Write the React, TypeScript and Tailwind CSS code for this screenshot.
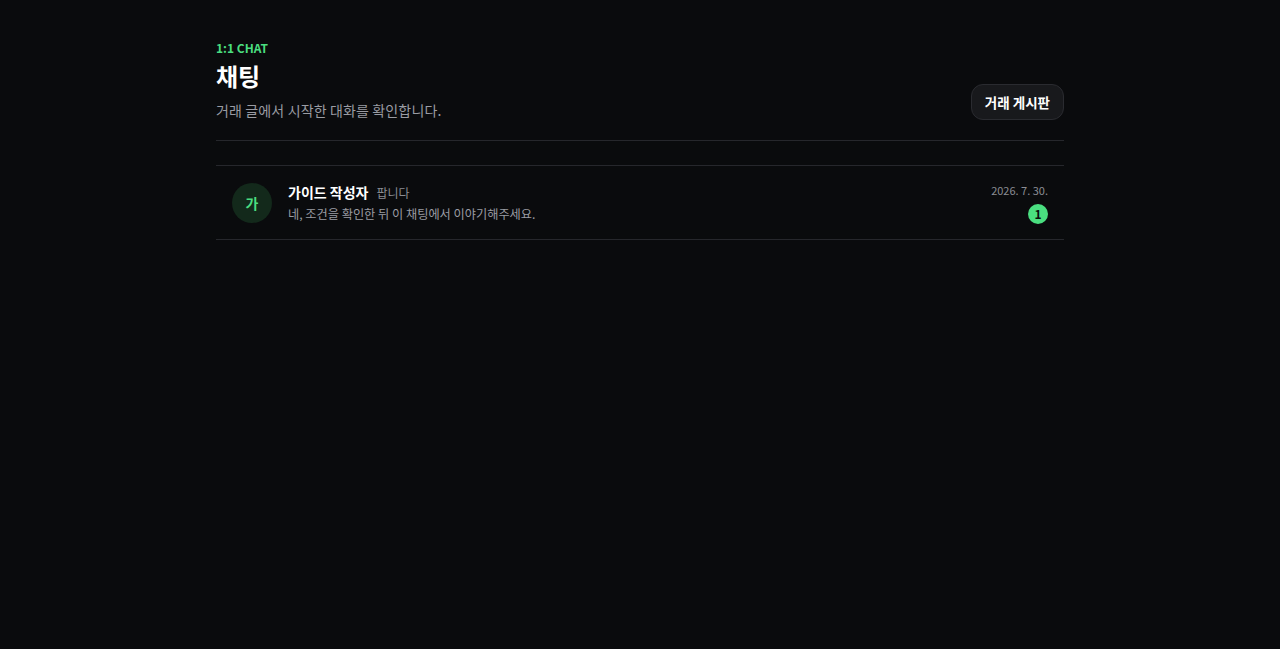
import React from "react";

type ChatRoom = {
  id: number;
  initial: string;
  name: string;
  postTitle: string;
  lastMessage: string;
  date: string;
  unread: number;
};

const rooms: ChatRoom[] = [
  {
    id: 1,
    initial: "가",
    name: "가이드 작성자",
    postTitle: "팝니다",
    lastMessage: "네, 조건을 확인한 뒤 이 채팅에서 이야기해주세요.",
    date: "2026. 7. 30.",
    unread: 1,
  },
];

const App: React.FC = () => {
  return (
    <div
      className="min-h-screen bg-[#0a0b0d] text-white"
      style={{ fontFamily: '"Noto Sans CJK KR", "Noto Sans", sans-serif' }}
    >
      <div className="mx-auto w-[848px] pt-10">
        {/* Header */}
        <div className="flex items-end justify-between border-b border-[#26272c] pb-5">
          <div>
            <p className="text-xs font-bold leading-4 text-[#4ade80]">1:1 CHAT</p>
            <h1 className="mt-1 text-2xl font-bold leading-8">채팅</h1>
            <p className="mt-2 text-sm leading-5 tracking-[0.01em] text-[#9a9ca3]">
              거래 글에서 시작한 대화를 확인합니다.
            </p>
          </div>
          <button className="h-9 rounded-xl border border-[#2a2b30] bg-[#18191c] px-[13px] text-[13.5px] font-bold text-white">
            거래 게시판
          </button>
        </div>

        {/* Room list */}
        <ul className="mt-6 border-t border-[#26272c]">
          {rooms.map((room) => (
            <li
              key={room.id}
              className="flex h-[74px] items-center gap-4 border-b border-[#26272c] px-4"
            >
              <div className="flex h-10 w-10 shrink-0 items-center justify-center rounded-full bg-[#13291b] text-sm font-bold text-[#4ade80]">
                {room.initial}
              </div>
              <div className="min-w-0 flex-1">
                <div className="flex items-baseline gap-2 leading-5">
                  <span className="text-sm font-bold">{room.name}</span>
                  <span className="text-xs text-[#8b8d94]">{room.postTitle}</span>
                </div>
                <p className="mt-[3px] truncate text-[12.2px] leading-[18px] text-[#9a9ca3]">
                  {room.lastMessage}
                </p>
              </div>
              <div className="flex flex-col items-end gap-1.5">
                <span className="text-[11px] leading-4 text-[#8b8d94]">{room.date}</span>
                {room.unread > 0 && (
                  <span className="flex h-5 min-w-5 items-center justify-center rounded-full bg-[#4ade80] px-1 text-xs font-bold text-[#0a0b0d]">
                    {room.unread}
                  </span>
                )}
              </div>
            </li>
          ))}
        </ul>
      </div>
    </div>
  );
};

export default App;
